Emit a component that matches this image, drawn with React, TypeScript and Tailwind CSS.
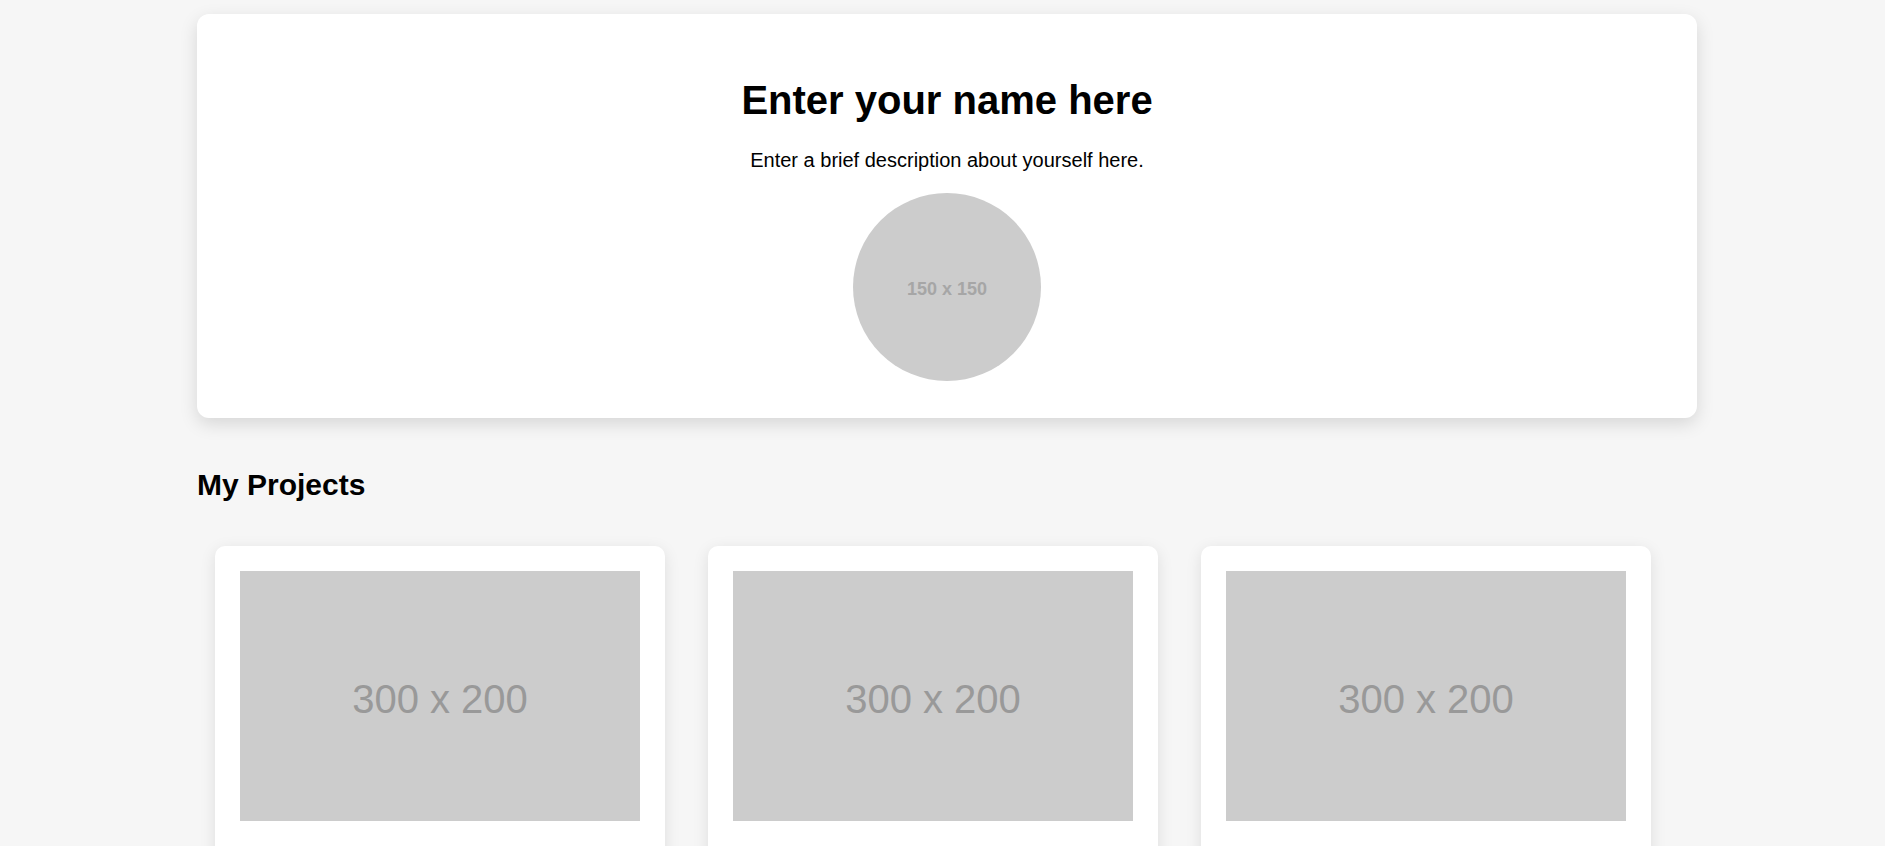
import React from "react";

function ProjectCard() {
  return (
    <div className="w-[450px] shrink-0 rounded-[10px] bg-white p-[25px] shadow-[0_4px_16px_rgba(0,0,0,0.1)]">
      <div className="flex h-[250px] w-[400px] items-center justify-center bg-[#cccccc]">
        <span className="pt-[6px] text-[40px] leading-[46px] text-[#999999]">300 x 200</span>
      </div>
      <div className="h-[120px]" />
    </div>
  );
}

export default function App() {
  return (
    <div
      className="min-h-[846px] w-full overflow-hidden bg-[#f6f6f6] pt-[14px] text-black"
      style={{ fontFamily: '"Liberation Sans", Arial, sans-serif' }}
    >
      <div className="ml-[197px] w-[1500px]">
        <header className="flex flex-col items-center rounded-[12px] bg-white pt-[63px] pb-[37px] shadow-[0_6px_18px_rgba(0,0,0,0.13)]">
          <h1 className="text-[40px] font-bold leading-[46px]">Enter your name here</h1>
          <p className="mt-[26px] text-[20px] leading-[23px]">Enter a brief description about yourself here.</p>
          <div className="mt-[21px] flex h-[188px] w-[188px] items-center justify-center rounded-full bg-[#cccccc]">
            <span className="pt-[3px] text-[18px] font-bold leading-[20px] text-[#a6a6a6]">150 x 150</span>
          </div>
        </header>

        <h2 className="mt-[50px] text-[30px] font-bold leading-[34px]">My Projects</h2>

        <div className="mt-[44px] flex gap-[43px] pl-[18px]">
          <ProjectCard />
          <ProjectCard />
          <ProjectCard />
        </div>
      </div>
    </div>
  );
}
